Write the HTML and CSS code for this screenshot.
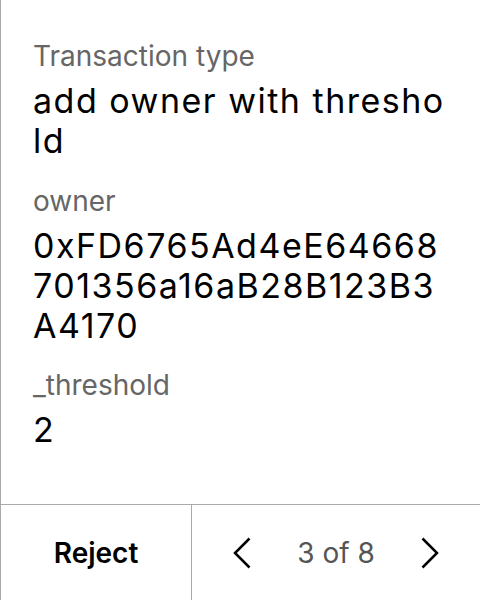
FILE: index.html
```html
<!DOCTYPE html>
<html>
<head>
<meta charset="utf-8">
<link rel="stylesheet" href="styles.css">
</head>
<body>
<div class="screen">
  <div class="content">
    <div class="field">
      <div class="label">Transaction type</div>
      <div class="value">add owner with threshold</div>
    </div>
    <div class="field">
      <div class="label">owner</div>
      <div class="value">0xFD6765Ad4eE64668701356a16aB28B123B3A4170</div>
    </div>
    <div class="field">
      <div class="label">_threshold</div>
      <div class="value">2</div>
    </div>
  </div>
  <div class="footer">
    <div class="reject">Reject</div>
    <div class="pager">
      <svg class="chev" width="18" height="32" viewBox="0 0 18 32"><path d="M16.5 1.5 L2 16 L16.5 30.5" fill="none" stroke="#000" stroke-width="2.5"/></svg>
      <span class="count">3 of 8</span>
      <svg class="chev" width="18" height="32" viewBox="0 0 18 32"><path d="M1.5 1.5 L16 16 L1.5 30.5" fill="none" stroke="#000" stroke-width="2.5"/></svg>
    </div>
  </div>
</div>
</body>
</html>
```

FILE: styles.css
```css
html, body {
  margin: 0;
  padding: 0;
  background: #fff;
}
body {
  font-family: Inter, "Noto Sans", sans-serif;
  color: #000;
}
.screen {
  width: 480px;
  height: 600px;
  box-sizing: border-box;
  border-left: 1px solid #aaa;
  display: flex;
  flex-direction: column;
}
.content {
  flex: 1;
  padding: 39px 30px 0 32px;
  display: flex;
  flex-direction: column;
  gap: 22.5px;
}
.label {
  font-size: 28px;
  line-height: 34px;
  color: #666;
}
.value {
  font-size: 34px;
  line-height: 40px;
  letter-spacing: 1.5px;
  word-break: break-all;
  margin-top: 8px;
}
.footer {
  height: 96px;
  border-top: 1px solid #aaa;
  box-sizing: border-box;
  display: grid;
  grid-template-columns: 191px 1fr;
}
.reject {
  border-right: 1px solid #aaa;
  display: flex;
  align-items: center;
  justify-content: center;
  font-size: 28px;
  font-weight: 600;
}
.pager {
  display: flex;
  align-items: center;
  justify-content: center;
  gap: 46px;
}
.count {
  font-size: 28px;
  color: #555;
}
.chev {
  display: block;
}
```
